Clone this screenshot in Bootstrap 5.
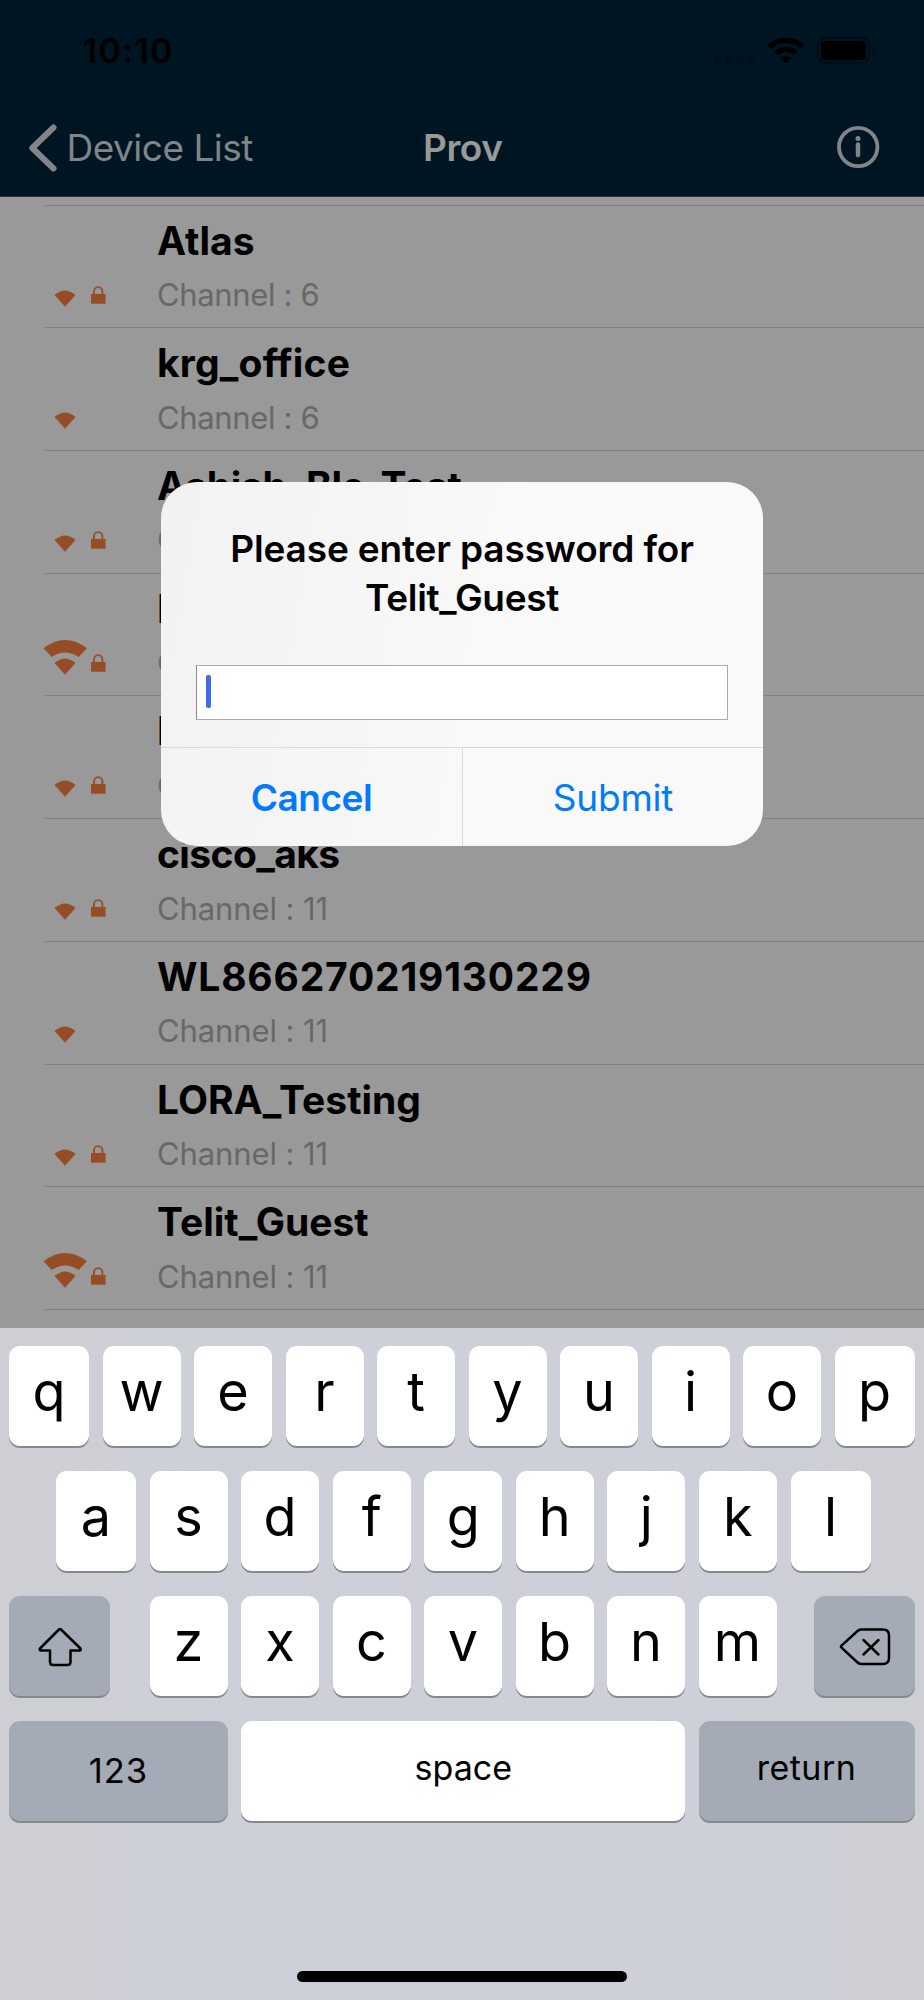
<!DOCTYPE html>
<html lang="en">
<head>
<meta charset="utf-8">
<meta name="viewport" content="width=device-width, initial-scale=1">
<title>Prov</title>
<link rel="stylesheet" href="https://cdn.jsdelivr.net/npm/bootstrap@5.3.0/dist/css/bootstrap.min.css">
<style>
  body { font-family: Inter, "Liberation Sans", sans-serif; color: #000; background: #999; }
  svg { display: block; flex: none; }
  .screen { width: 924px; height: 2000px; }

  /* header */
  .topbar { height: 197px; background: #001522; border-bottom: 1px solid #2c3442; }
  .statusbar { height: 99px; padding: 2px 47px 0 82.5px; }
  .clock { font-size: 34.5px; font-weight: 600; letter-spacing: 1.1px; line-height: 50px; }
  .titlebar { height: 97px; padding: 0 41.5px 0 28px; }
  .side { width: 0; flex: 1 1 0; }
  .back { font-size: 37px; line-height: 50px; letter-spacing: -.5px; color: #7f8588; gap: 9.5px; }
  .heading { margin-left: 15px; font-size: 37px; font-weight: 600; line-height: 50px; letter-spacing: -.5px; color: #999; }

  /* network list */
  .networks { padding: 7.6px 0 0 45px; }
  .network { height: 122.73px; border-top: 1px solid #818181; flex: none; color: #964d26; }
  .ssid { padding-top: 11px; font-size: 39px; font-weight: 700; line-height: 48px; color: #000; white-space: nowrap; }
  .chan { margin-top: 10.4px; font-size: 31px; line-height: 40px; color: #686868; letter-spacing: -.1px; white-space: nowrap; }
  .chan-6 { letter-spacing: -.35px; }
  .ls-krg { letter-spacing: .2px; }
  .ls-ble { letter-spacing: -.35px; }
  .ls-cisco { letter-spacing: -.6px; }
  .ls-wl { letter-spacing: .82px; }

  /* password prompt */
  .prompt { left: 161px; top: 482px; width: 602px; height: 364px; border-radius: 36px; background: linear-gradient(100deg, #f2f2f2 0, #f5f5f5 28%, #f9f9f9 55%); }
  .prompt-title { padding-top: 41.5px; font-size: 37px; font-weight: 600; line-height: 49.5px; letter-spacing: -.14px; height: 183px; }
  .prompt-title span { letter-spacing: -.3px; }
  .field { height: 55px; margin: 0 35px; border: 1px solid #aaa; border-left-color: #888; padding: 9px 0 0 9px; background: #fff; }
  .caret { width: 5px; height: 33px; border-radius: 2px; background: #3f69f0; }
  .actions { margin-top: 27px; height: 99px; border-top: 1px solid #dadada; }
  .action { width: 300px; font-size: 37px; line-height: 98px; color: #007aff; padding-top: 1px; letter-spacing: -.2px; }
  .action-main { width: 302px; border-right: 1px solid #dadada; font-weight: 600; letter-spacing: -.5px; }

  /* keyboard */
  .keyboard { height: 672px; padding: 18px 9.5px 0 9px; background: linear-gradient(90deg, #cecfd4, #cdd0d9 30%, #cdd0d9 70%, #cdcfd4); }
  .keys { height: 100px; margin-bottom: 25px; }
  .key { height: 100px; border-radius: 11px; background: #fff; box-shadow: 0 2px 0 #86888c; font-size: 54px; font-weight: 370; padding-bottom: 9.5px; width: 78px; flex: none; }
  .key-row2 { padding: 0 44px 0 47px; }
  .key-wide, .key-fn { font-size: 34px; font-weight: 400; padding-bottom: 7px; }
  .key-fn { background: #a5abb6; }
  .key-edge { width: 80px; }
  .key-icon { width: 100.5px; padding: 2px 0 0 2px; }
  .letters { width: 627px; margin-left: 2.5px; }
  .key-num { width: 219px; font-size: 34.5px; letter-spacing: 1px; padding-bottom: 0; }
  .key-space { width: 444px; }
  .key-return { width: 216px; letter-spacing: .5px; }
  .homebar { width: 330px; height: 11px; border-radius: 6px; background: #000; margin: 0 auto; }
  .homebar-gap { height: 125px; }
</style>
</head>
<body>
<div class="screen position-relative d-flex flex-column overflow-hidden">
  <header class="topbar flex-shrink-0">
    <div class="statusbar d-flex align-items-center justify-content-between">
      <div class="clock">10:10</div>
      <svg width="164" height="30" viewBox="713 36 164 30">
        <g fill="#000f19"><circle cx="717.5" cy="59.5" r="3.8"/><circle cx="729" cy="59.5" r="3.8"/><circle cx="740.3" cy="59.5" r="3.8"/><circle cx="751.5" cy="59.5" r="3.8"/></g>
        <g fill="none" stroke="#000" stroke-width="5.4"><path d="M769.6 47A23 23 0 0 1 802.4 47"/><path d="M776.3 53.4A14 14 0 0 1 795.7 53.4"/></g>
        <path d="M780.6 58.4A8 8 0 0 1 791.4 58.4L786 63.6Z"/>
        <rect x="818" y="37.8" width="51.5" height="25" rx="7" fill="none" stroke="#000d16" stroke-width="2"/>
        <rect x="821" y="41" width="45" height="19" rx="4"/>
        <path d="M872.6 45.6q3.4 1.6 3.4 4.9t-3.4 4.9z" fill="#000d16"/>
      </svg>
    </div>
    <nav class="titlebar d-flex align-items-center">
      <div class="back side d-flex align-items-center">
        <svg width="29" height="50" viewBox="27.5 123 29 50"><path d="M53 127.5L31.8 148L53 168.5" fill="none" stroke="#7f8588" stroke-width="6" stroke-linecap="round" stroke-linejoin="round"/></svg>
        <span class="text-nowrap">Device List</span>
      </div>
      <div class="heading">Prov</div>
      <div class="side d-flex justify-content-end">
        <svg width="50" height="46" viewBox="832.5 125 50 46"><circle cx="857.7" cy="147" r="19.2" fill="none" stroke="#7f8588" stroke-width="3.8"/><circle cx="857.5" cy="138.5" r="2.5" fill="#7f8588"/><path d="M857.5 144.5V155" stroke="#7f8588" stroke-width="4.5" stroke-linecap="round"/></svg>
      </div>
    </nav>
  </header>

  <main class="networks flex-grow-1 d-flex flex-column overflow-hidden" id="networks"></main>

  <section class="keyboard flex-shrink-0" id="keyboard"></section>

  <div class="prompt position-absolute overflow-hidden" role="dialog">
    <div class="prompt-title text-center">Please enter password for<br><span>Telit_Guest</span></div>
    <div class="field"><div class="caret"></div></div>
    <div class="actions d-flex text-center">
      <div class="action action-main flex-shrink-0">Cancel</div>
      <div class="action flex-shrink-0">Submit</div>
    </div>
  </div>
</div>

<script>
  const lock = '<path d="M91 89h14.6v9.7H91z"/><path d="M94 89.5V86.3a4.2 4.2 0 0 1 8.4 0V89.5" fill="none" stroke="currentColor" stroke-width="1.9"/>';
  const dot = '<path d="M54.5 90Q65 81 75.5 90L65 101.7Z"/>';
  const arc = '<path d="M43.5 75.3Q65 58.8 87 75.3L78.7 84Q65 74.8 51.7 84Z"/>';
  const networks = [
    ['Atlas', 6, 1, 0, ''], ['krg_office', 6, 0, 0, 'ls-krg'], ['Ashish_Ble_Test', 6, 1, 0, 'ls-ble'],
    ['I', 6, 1, 1, ''], ['I', 11, 1, 0, ''], ['cisco_aks', 11, 1, 0, 'ls-cisco'],
    ['WL866270219130229', 11, 0, 0, 'ls-wl'], ['LORA_Testing', 11, 1, 0, ''], ['Telit_Guest', 11, 1, 1, ''], ['', '', 0, 0, '']
  ];
  document.getElementById('networks').innerHTML = networks.map(([name, ch, locked, strong, cls]) => name
    ? `<div class="network d-flex"><svg width="112" height="120" viewBox="45 1 112 120" fill="currentColor" overflow="visible">${dot}${strong ? arc : ''}${locked ? lock : ''}</svg><div><div class="ssid ${cls}">${name}</div><div class="chan ${ch === 6 ? 'chan-6' : ''}">Channel : ${ch}</div></div></div>`
    : '<div class="network"></div>').join('');

  const key = (c, cls = '') => `<div class="key d-flex align-items-center justify-content-center ${cls}">${c}</div>`;
  const letters = s => [...s].map(c => key(c)).join('');
  const row = (html, cls = '') => `<div class="keys d-flex justify-content-between ${cls}">${html}</div>`;
  const shift = '<svg width="46" height="42" viewBox="0 0 46 42" fill="none" stroke="#000" stroke-width="2.5" stroke-linejoin="round"><path d="M22 3.5q1-.8 2 0L43.5 22.5q1 2-1 2H33.5V36q0 3-3 3H16q-3 0-3-3V24.5H4q-2-.3-1-2Z"/></svg>';
  const del = '<svg width="52" height="40" viewBox="0 0 52 40" fill="none" stroke="#000" stroke-width="2.5" stroke-linecap="round" stroke-linejoin="round"><path d="M22 2.5H44q6 0 6 6V31q0 6-6 6H22q-2 0-4-2L2.5 20.7q-1-1 0-2L18 4.5q2-2 4-2Z"/><path d="M24.5 13L39.5 27.5M39.5 13L24.5 27.5"/></svg>';
  document.getElementById('keyboard').innerHTML =
    row(key('q', 'key-edge') + letters('wertyuio') + key('p', 'key-edge')) +
    row(key('a', 'key-edge') + letters('sdfghjk') + key('l', 'key-edge'), 'key-row2') +
    row(key(shift, 'key-fn key-icon') + `<div class="letters d-flex justify-content-between">${letters('zxcvbnm')}</div>` + key(del, 'key-fn key-icon')) +
    row(key('123', 'key-fn key-num') + key('space', 'key-wide key-space') + key('return', 'key-fn key-return')) +
    '<div class="homebar-gap"></div><div class="homebar"></div>';
</script>
<script src="https://cdn.jsdelivr.net/npm/bootstrap@5.3.0/dist/js/bootstrap.bundle.min.js"></script>
</body>
</html>
